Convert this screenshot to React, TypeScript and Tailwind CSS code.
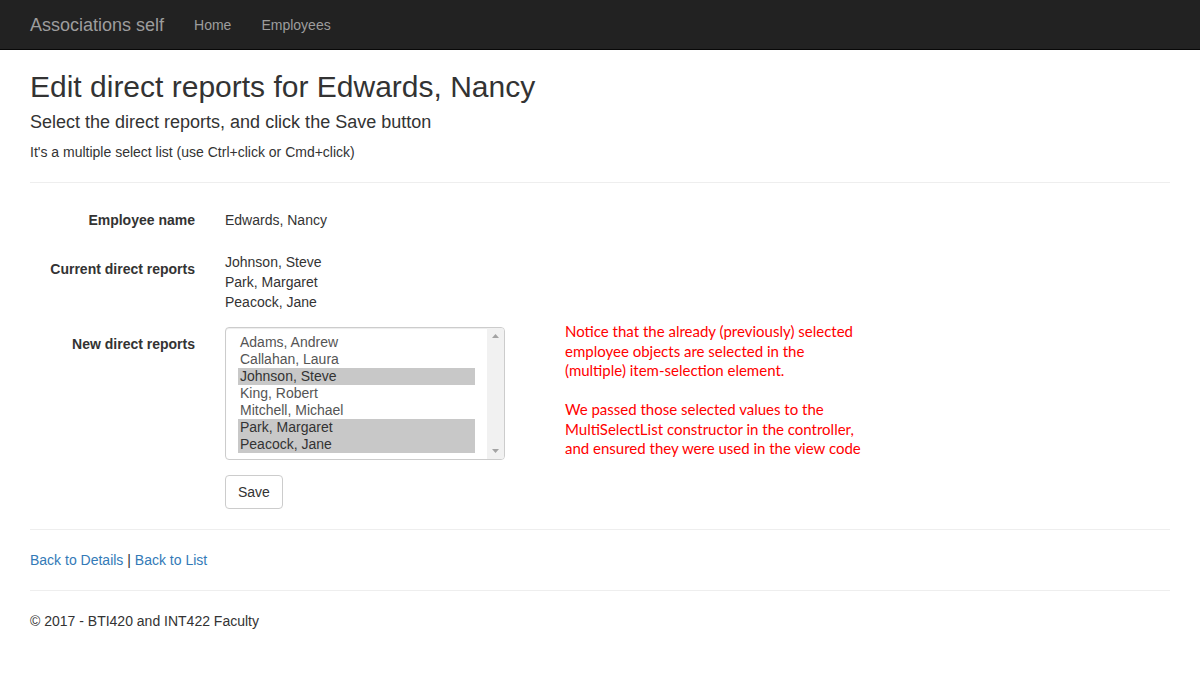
import React from 'react';

const options = [
  { name: 'Adams, Andrew', selected: false },
  { name: 'Callahan, Laura', selected: false },
  { name: 'Johnson, Steve', selected: true },
  { name: 'King, Robert', selected: false },
  { name: 'Mitchell, Michael', selected: false },
  { name: 'Park, Margaret', selected: true },
  { name: 'Peacock, Jane', selected: true },
];

const Navbar = () => (
  <nav className="h-[50px] bg-[#222] border-b border-[#080808]">
    <div className="flex items-center h-full px-[30px]">
      <a className="text-[18px] leading-[20px] text-[#9d9d9d] pr-[15px]" href="#">
        Associations self
      </a>
      <a className="text-[14px] leading-[20px] text-[#9d9d9d] px-[15px]" href="#">
        Home
      </a>
      <a className="text-[14px] leading-[20px] text-[#9d9d9d] px-[15px]" href="#">
        Employees
      </a>
    </div>
  </nav>
);

const FakeMultiSelect = () => (
  <div className="relative w-[280px] h-[133px] border border-[#ccc] rounded-[4px] bg-white shadow-[inset_0_1px_1px_rgba(0,0,0,0.075)] flex overflow-hidden">
    <div className="flex-1 pl-[12px] pr-[12px] pt-[6px]">
      {options.map((o) => (
        <div
          key={o.name}
          className={
            o.selected
              ? 'h-[17px] leading-[16px] px-[2px] bg-[#c8c8c8] text-[#333]'
              : 'h-[17px] leading-[16px] px-[2px] text-[#555]'
          }
        >
          {o.name}
        </div>
      ))}
    </div>
    {/* scrollbar */}
    <div className="w-[17px] h-full bg-[#f1f1f1] flex flex-col items-center justify-between py-[6px]">
      <svg width="7" height="4" viewBox="0 0 7 4">
        <path d="M3.5 0 L7 4 L0 4 Z" fill="#a3a3a3" />
      </svg>
      <svg width="7" height="4" viewBox="0 0 7 4">
        <path d="M0 0 L7 0 L3.5 4 Z" fill="#a3a3a3" />
      </svg>
    </div>
  </div>
);

export default function App() {
  return (
    <div className="min-h-[700px] bg-white text-[#333] text-[14px] leading-[20px] font-['Liberation_Sans',Arial,sans-serif]">
      <Navbar />
      <div className="px-[30px]">
        <h2 className="text-[30px] leading-[33px] mt-[20px] mb-[9px]">
          Edit direct reports for Edwards, Nancy
        </h2>
        <h4 className="text-[18px] leading-[20px] mt-[9px] mb-[10px]">
          Select the direct reports, and click the Save button
        </h4>
        <p className="mb-[10px]">It's a multiple select list (use Ctrl+click or Cmd+click)</p>
        <hr className="mt-[20px] mb-[20px] border-t border-[#eee]" />

        <div className="flex flex-col">
          <div className="flex mb-[15px]">
            <div className="w-[165px] text-right font-bold pt-[7px]">Employee name</div>
            <div className="ml-[30px] py-[7px] min-h-[34px]">Edwards, Nancy</div>
          </div>
          <div className="flex mb-[15px]">
            <div className="w-[165px] text-right font-bold pt-[7px]">Current direct reports</div>
            <div className="ml-[30px]">
              <div>Johnson, Steve</div>
              <div>Park, Margaret</div>
              <div>Peacock, Jane</div>
            </div>
          </div>
          <div className="flex mb-[15px]">
            <div className="w-[165px] text-right font-bold pt-[7px]">New direct reports</div>
            <div className="ml-[30px] flex items-start gap-[60px]">
              <FakeMultiSelect />
              <div className="-mt-[5px] text-[#ff0000] text-[15px] leading-[19.5px] font-['Lato',sans-serif]">
                Notice that the already (previously) selected
                <br />
                employee objects are selected in the
                <br />
                (multiple) item-selection element.
                <br />
                <br />
                We passed those selected values to the
                <br />
                MultiSelectList constructor in the controller,
                <br />
                and ensured they were used in the view code
              </div>
            </div>
          </div>
          <div className="flex">
            <div className="w-[165px]" />
            <div className="ml-[30px]">
              <button className="h-[34px] px-[12px] border border-[#ccc] rounded-[4px] bg-white text-[#333]">
                Save
              </button>
            </div>
          </div>
        </div>

        <hr className="mt-[20px] mb-[20px] border-t border-[#eee]" />
        <p className="mb-[10px]">
          <a className="text-[#337ab7]" href="#">Back to Details</a> |{' '}
          <a className="text-[#337ab7]" href="#">Back to List</a>
        </p>
        <hr className="mt-[20px] mb-[20px] border-t border-[#eee]" />
        <footer>
          <p>© 2017 - BTI420 and INT422 Faculty</p>
        </footer>
      </div>
    </div>
  );
}
